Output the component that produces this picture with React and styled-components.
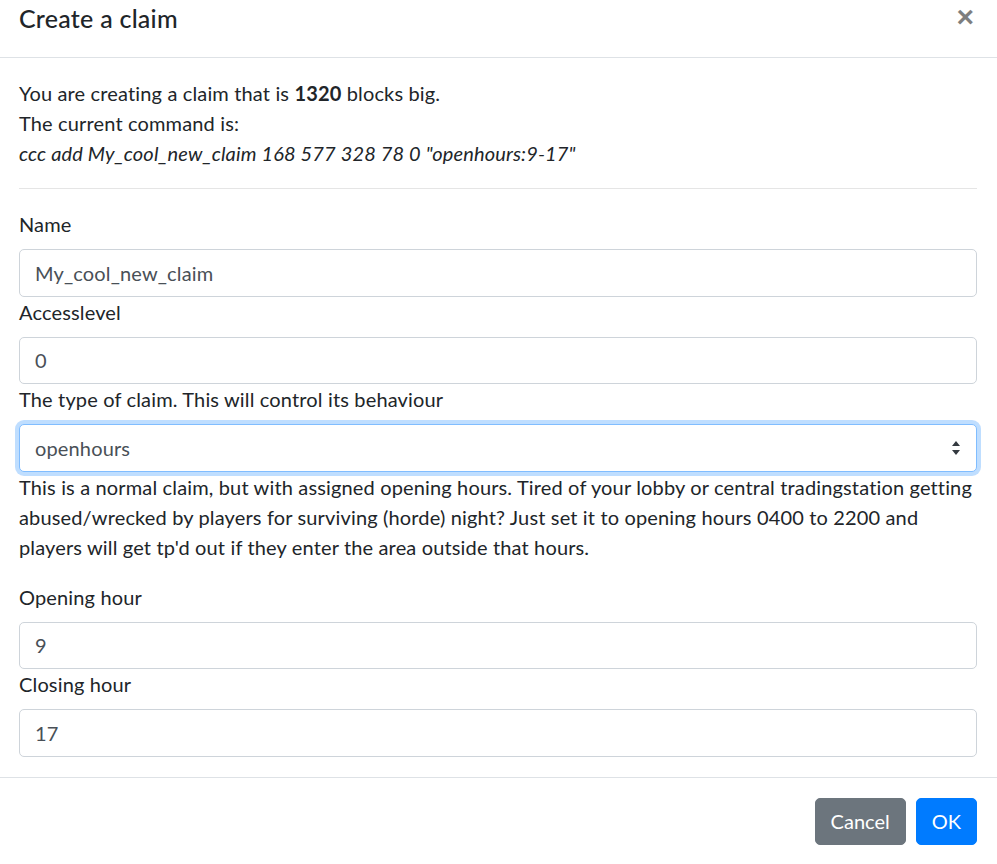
import React from "react";
import styled, { createGlobalStyle } from "styled-components";

const GlobalStyle = createGlobalStyle`
  * { box-sizing: border-box; }
  html, body { margin: 0; padding: 0; background: #fff; }
  body {
    font-family: "Lato", "Open Sans", sans-serif;
    font-size: 20px;
    line-height: 30px;
    letter-spacing: 0.15px;
    color: #212529;
  }
`;

const Modal = styled.div`
  width: 997px;
  height: 864px;
  display: flex;
  flex-direction: column;
  background: #fff;
  overflow: hidden;
`;

const Header = styled.div`
  display: flex;
  align-items: flex-start;
  justify-content: space-between;
  padding: 0 20px 20px 19px;
  border-bottom: 1px solid #dee2e6;
`;

const Title = styled.h5`
  margin: 0;
  font-size: 25px;
  line-height: 37px;
  font-weight: 500;
  letter-spacing: 0.25px;
`;

const Close = styled.button`
  border: 0;
  background: transparent;
  padding: 0;
  margin-right: 3px;
  font-family: "Liberation Sans", sans-serif;
  font-size: 30px;
  line-height: 34px;
  font-weight: 700;
  color: #000;
  opacity: 0.5;
  cursor: pointer;
`;

const Body = styled.div`
  padding: 20px 20px 20px 19px;
  flex: 1;
`;

const Para = styled.p`
  margin: 0;
`;

const Divider = styled.hr`
  margin: 20px 0;
  border: 0;
  border-top: 1px solid rgba(0, 0, 0, 0.1);
`;

const Label = styled.label`
  display: block;
  margin-bottom: 10px;
`;

const Input = styled.input`
  display: block;
  width: 100%;
  height: 47.5px;
  padding: 7.5px 15px;
  font: inherit;
  letter-spacing: inherit;
  color: #495057;
  background: #fff;
  border: 1px solid #ced4da;
  border-radius: 5px;
  outline: none;
`;

const SelectWrap = styled.div`
  position: relative;
`;

const Select = styled.select`
  display: block;
  width: 100%;
  height: 47.5px;
  padding: 7.5px 40px 7.5px 15px;
  font: inherit;
  letter-spacing: inherit;
  color: #495057;
  background: #fff;
  border: 1px solid #80bdff;
  border-radius: 5px;
  box-shadow: 0 0 0 4px rgba(0, 123, 255, 0.25);
  outline: none;
  appearance: none;
`;

const Arrows = styled.svg`
  position: absolute;
  right: 16px;
  top: 17px;
  pointer-events: none;
`;

const Help = styled.p`
  margin: 0 0 20px;
`;

const Footer = styled.div`
  display: flex;
  justify-content: flex-end;
  padding: 15px;
  border-top: 1px solid #dee2e6;
`;

const Button = styled.button`
  margin: 5px;
  height: 47.5px;
  padding: 7.5px 15px;
  font: inherit;
  letter-spacing: 0;
  color: #fff;
  border: 1px solid ${(p) => p.$bg};
  background: ${(p) => p.$bg};
  border-radius: 5px;
  cursor: pointer;
`;

const App = () => {
  return (
    <Modal>
      <GlobalStyle />
      <Header>
        <Title>Create a claim</Title>
        <Close aria-label="Close">×</Close>
      </Header>
      <Body>
        <Para>
          You are creating a claim that is <b>1320</b> blocks big.
        </Para>
        <Para>The current command is:</Para>
        <Para>
          <i>ccc add My_cool_new_claim 168 577 328 78 0 "openhours:9-17"</i>
        </Para>
        <Divider />
        <Label>Name</Label>
        <Input defaultValue="My_cool_new_claim" />
        <Label>Accesslevel</Label>
        <Input defaultValue="0" />
        <Label>The type of claim. This will control its behaviour</Label>
        <SelectWrap>
          <Select defaultValue="openhours">
            <option value="normal">normal</option>
            <option value="openhours">openhours</option>
          </Select>
          <Arrows width="10" height="14" viewBox="0 0 10 14">
            <path d="M5 0 L9 5 H1 Z M5 14 L1 9 H9 Z" fill="#343a40" />
          </Arrows>
        </SelectWrap>
        <Help>
          This is a normal claim, but with assigned opening hours. Tired of
          your lobby or central tradingstation getting abused/wrecked by
          players for surviving (horde) night? Just set it to opening hours
          0400 to 2200 and players will get tp'd out if they enter the area
          outside that hours.
        </Help>
        <Label>Opening hour</Label>
        <Input defaultValue="9" />
        <Label>Closing hour</Label>
        <Input defaultValue="17" />
      </Body>
      <Footer>
        <Button $bg="#6c757d">Cancel</Button>
        <Button $bg="#007bff">OK</Button>
      </Footer>
    </Modal>
  );
};

export default App;
